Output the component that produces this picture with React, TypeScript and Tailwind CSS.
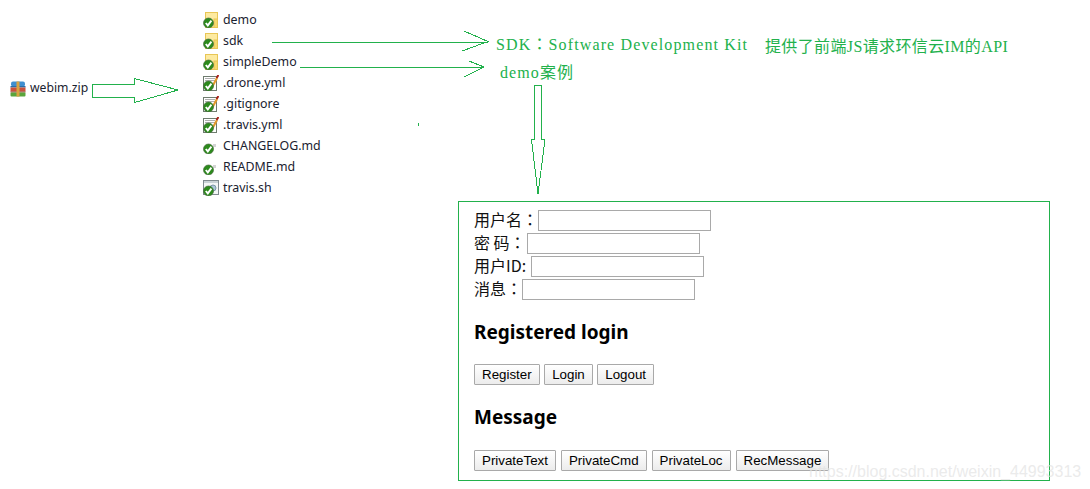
import type { ReactNode } from 'react';

const cjk = '"Noto Sans CJK SC", "Noto Sans", sans-serif';
const serif = '"Liberation Serif", "Noto Sans CJK SC", serif';

function Badge() {
  return (
    <g>
      <circle cx="5.5" cy="11" r="5" fill="#2c8a1c" stroke="#4a6d42" strokeWidth="0.7" />
      <path d="M2.8 11 L4.8 13.4 L8.4 8.6" fill="none" stroke="#fff" strokeWidth="1.9" />
    </g>
  );
}

function FolderIcon() {
  return (
    <svg width="16" height="16" viewBox="0 0 16 16">
      <rect x="2.5" y="0.5" width="12" height="15" fill="#fdeaa0" stroke="#e8c655" />
      <rect x="11" y="7" width="3.5" height="8.5" fill="#f7d96f" stroke="#e8c655" />
      <Badge />
    </svg>
  );
}

function EditIcon() {
  return (
    <svg width="16" height="16" viewBox="0 0 16 16">
      <rect x="0.5" y="1.5" width="13" height="14" fill="#fff" stroke="#6f7c6f" />
      <path d="M2 3.5h10M2 5.5h10" stroke="#b0b0b0" />
      <path d="M9 12 L14 3" stroke="#e29a2c" strokeWidth="2.2" />
      <path d="M13.6 3 L15.4 0" stroke="#a8231c" strokeWidth="2" />
      <Badge />
    </svg>
  );
}

function BlankIcon() {
  return (
    <svg width="16" height="16" viewBox="0 0 16 16">
      <rect x="10" y="6" width="3" height="3" fill="#d4d4d4" />
      <Badge />
    </svg>
  );
}

function ScriptIcon() {
  return (
    <svg width="16" height="16" viewBox="0 0 16 16">
      <rect x="0.5" y="0.5" width="15" height="14" fill="#f4f6f7" stroke="#7f8a8f" />
      <rect x="1" y="1" width="14" height="2" fill="#c9d2d6" />
      <circle cx="10" cy="8" r="3" fill="#a9c6d8" stroke="#7c98a8" />
      <Badge />
    </svg>
  );
}

function ZipIcon() {
  return (
    <svg width="16" height="16" viewBox="0 0 16 16">
      <rect x="1" y="0.5" width="14" height="5" rx="2" fill="#3f8fd0" />
      <rect x="0.5" y="5" width="15" height="1.5" fill="#2b6ea8" />
      <rect x="0.5" y="6.5" width="15" height="4" fill="#c9523c" />
      <rect x="0.5" y="10.5" width="15" height="1" fill="#8a3a2c" />
      <rect x="0.5" y="11.5" width="15" height="4" rx="1" fill="#5aa53c" />
      <rect x="6.5" y="0.5" width="3" height="15" fill="#d9a441" />
    </svg>
  );
}

const files: { name: string; icon: ReactNode }[] = [
  { name: 'demo', icon: <FolderIcon /> },
  { name: 'sdk', icon: <FolderIcon /> },
  { name: 'simpleDemo', icon: <FolderIcon /> },
  { name: '.drone.yml', icon: <EditIcon /> },
  { name: '.gitignore', icon: <EditIcon /> },
  { name: '.travis.yml', icon: <EditIcon /> },
  { name: 'CHANGELOG.md', icon: <BlankIcon /> },
  { name: 'README.md', icon: <BlankIcon /> },
  { name: 'travis.sh', icon: <ScriptIcon /> },
];

function Colon() {
  return <span style={{ fontFamily: '"Noto Sans CJK TC", sans-serif' }}>：</span>;
}

function Field({ label, pad = '' }: { label: ReactNode; pad?: string }) {
  return (
    <div className="flex h-[23px] items-center text-[16px] text-[#111]" style={{ fontFamily: cjk }}>
      <span className={`mb-[4px] whitespace-pre ${pad}`}>{label}</span>
      <input className="h-[21px] w-[173px] border border-[#a9a9a9] bg-white" />
    </div>
  );
}

function Btn({ children }: { children: ReactNode }) {
  return (
    <button className="h-[21px] rounded-[1px] border border-[#a9a9a9] bg-gradient-to-b from-white to-[#ececec] px-[7px] font-['Liberation_Sans',sans-serif] text-[13.33px] leading-none text-black">
      {children}
    </button>
  );
}

// hand-drawn arrows on top of the page
function Arrows() {
  return (
    <svg
      className="pointer-events-none absolute left-0 top-0"
      width="1090"
      height="489"
      fill="none"
      stroke="#22b14c"
      shapeRendering="crispEdges"
    >
      <path d="M92.5 84.5H134.5V78.5L178 90L134.5 102.5V97.5H92.5Z" />
      <path d="M272 42.5H488M464 31L488 41.5L462 51" />
      <path d="M300 67.5H484M469 61L484 67L464 77" />
      <path d="M418.5 123V126" />
      <path d="M534.5 85.5H541.5V139.5H545L538 194L531.5 139.5H534.5Z" />
    </svg>
  );
}

export default function App() {
  return (
    <div className="relative flex h-[489px] w-[1090px] overflow-hidden bg-white">
      <div className="w-[203px] pl-[10px] pt-[78px]">
        <div className="flex h-[21px] items-center gap-[4px] font-['Noto_Sans',sans-serif] text-[12.2px] text-[#1a2230]">
          <ZipIcon />
          <span>webim.zip</span>
        </div>
      </div>

      <div className="w-[255px] pt-[9px]">
        {files.map(f => (
          <div key={f.name} className="flex h-[21px] items-center gap-[4px] font-['Noto_Sans',sans-serif] text-[12.4px] text-[#1a2230]">
            {f.icon}
            <span className="mt-[2px]">{f.name}</span>
          </div>
        ))}
      </div>

      <div className="w-[592px]">
        <div className="flex h-[61px] items-start pl-[38px] pt-[31px] text-[#22b14c]" style={{ fontFamily: serif }}>
          <span className="w-[269px] text-[16px] leading-[24px] tracking-[1.13px]">
            SDK<span style={{ fontFamily: '"Noto Sans CJK TC", serif' }}>：</span>Software Development Kit
          </span>
          <span className="mt-[4px] text-[16px] leading-[24px] tracking-[0.37px]">提供了前端JS请求环信云IM的API</span>
        </div>
        <div className="h-[140px] pl-[42px] text-[16px] leading-[24px] tracking-[1.1px] text-[#22b14c]" style={{ fontFamily: serif }}>
          demo案例
        </div>

        <div className="h-[280px] border border-[#22b14c] pl-[15px] pt-[7px]">
          <Field label={<>用户名<Colon /></>} />
          <Field label={<>密 码<Colon /></>} pad="pr-[1px]" />
          <Field label="用户ID:" pad="pr-[5px]" />
          <Field label={<>消息<Colon /></>} />

          <h3 className="mt-[18px] font-['Noto_Sans',sans-serif] text-[19px] font-bold leading-[26px] text-black">Registered login</h3>
          <div className="mt-[19px] flex gap-[4.5px]">
            <Btn>Register</Btn>
            <Btn>Login</Btn>
            <Btn>Logout</Btn>
          </div>

          <h3 className="mt-[19px] font-['Noto_Sans',sans-serif] text-[19px] font-bold leading-[26px] text-black">Message</h3>
          <div className="mt-[20px] flex gap-[5px]">
            <Btn>PrivateText</Btn>
            <Btn>PrivateCmd</Btn>
            <Btn>PrivateLoc</Btn>
            <Btn>RecMessage</Btn>
          </div>
        </div>
      </div>

      <Arrows />

      <span className="absolute left-[809px] top-[460px] font-['Liberation_Sans',sans-serif] text-[16px] text-[#e2e2e2]/70">
        https://blog.csdn.net/weixin_44993313
      </span>
    </div>
  );
}
